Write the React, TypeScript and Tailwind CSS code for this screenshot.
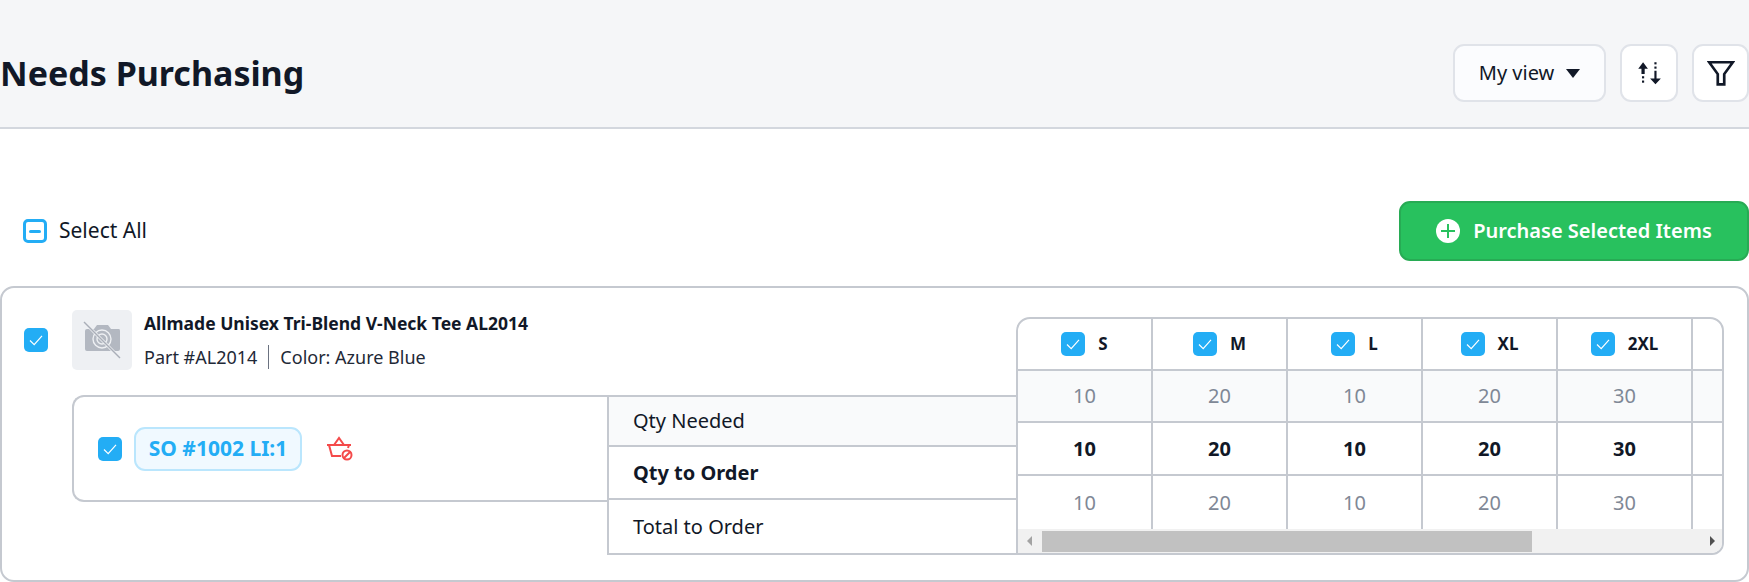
import { useState } from "react";

const SIZES = [
  { label: "S", qty: 10 },
  { label: "M", qty: 20 },
  { label: "L", qty: 10 },
  { label: "XL", qty: 20 },
  { label: "2XL", qty: 30 },
];

function CheckBox() {
  return (
    <span className="flex h-6 w-6 shrink-0 items-center justify-center rounded-[5px] bg-[#23adf5]">
      <svg width="16" height="16" viewBox="0 0 16 16" fill="none" stroke="#ffffff" strokeWidth="1.2">
        <path d="M2 8.5 L6.2 12.6 L14 3.8" />
      </svg>
    </span>
  );
}

function SortIcon() {
  return (
    <svg width="28" height="28" viewBox="0 0 26 26" fill="#111827">
      <path d="M7.5 3 L12 9 L9 9 L9 14 L6 14 L6 9 L3 9 Z" />
      <rect x="6.5" y="16" width="2" height="2" />
      <rect x="6.5" y="20" width="2" height="2" />
      <rect x="18" y="3" width="2" height="2" />
      <rect x="18" y="7" width="2" height="2" />
      <path d="M18 11 H20 V18 H24 L19 23.5 L14 18 H18 Z" />
    </svg>
  );
}

function FilterIcon() {
  return (
    <svg width="28" height="28" viewBox="0 0 26 26" fill="none" stroke="#111827" strokeWidth="2.5">
      <path d="M2 3 H24 L16 14 V23.5 H10 V14 Z" />
    </svg>
  );
}

function NoPhotoIcon() {
  return (
    <svg width="38" height="38" viewBox="0 0 38 38" fill="none">
      <path
        d="M4 8 H11 L14 4 H25 L28 8 H36 Q37 8 37 10 V28 Q37 30 35 30 H4 Q2 30 2 28 V10 Q2 8 4 8 Z"
        fill="#b3b8c1"
      />
      <circle cx="19" cy="18" r="9" stroke="#eef0f3" strokeWidth="1.4" />
      <circle cx="19" cy="18" r="5" stroke="#eef0f3" strokeWidth="1.4" />
      <path d="M1 1 L37 37" stroke="#eef0f3" strokeWidth="3" />
      <path d="M1 1 L37 37" stroke="#a9aeb8" strokeWidth="1.4" />
    </svg>
  );
}

function BasketOffIcon() {
  return (
    <svg width="28" height="26" viewBox="0 0 28 26" fill="none" stroke="#f44a4a" strokeWidth="2">
      <path d="M1 9 H25" />
      <path d="M8 9 L13 2 L18 9" />
      <path d="M3 9 L6 20 H15" />
      <path d="M23 9 L22 12" />
      <circle cx="21" cy="19" r="4.5" />
      <path d="M18 22 L24 16" />
    </svg>
  );
}

export default function App() {
  const [view] = useState("My view");

  return (
    <div className="h-[582px] w-full overflow-hidden bg-white text-[#111827] [font-family:'Noto_Sans',sans-serif]">
      {/* Page header */}
      <div className="flex h-[129px] items-center justify-between border-b-2 border-[#d3d7de] bg-[#f5f6f8] pt-[19px]">
        <h1 className="text-[34px] leading-none font-bold">Needs Purchasing</h1>
        <div className="flex items-center gap-[14px]">
          <button className="flex h-[58px] w-[153px] items-center justify-center gap-[12px] rounded-[11px] border-2 border-[#e0e3e9] bg-[#fbfcfe] text-[20px]">
            {view}
            <span className="h-0 w-0 border-x-[7px] border-t-[9px] border-x-transparent border-t-[#111827]" />
          </button>
          <button className="flex h-[58px] w-[58px] items-center justify-center rounded-[11px] border-2 border-[#e0e3e9] bg-white">
            <SortIcon />
          </button>
          <button className="flex h-[58px] w-[57px] items-center justify-center rounded-[11px] border-2 border-[#e0e3e9] bg-white">
            <FilterIcon />
          </button>
        </div>
      </div>

      {/* Select all + purchase */}
      <div className="flex items-center justify-between pt-[72px] pl-[23px]">
        <label className="flex items-center gap-[12px] text-[21px]">
          <span className="flex h-6 w-6 items-center justify-center rounded-[5px] border-[3px] border-[#23adf5]">
            <span className="h-[3px] w-3 rounded-full bg-[#23adf5]" />
          </span>
          Select All
        </label>
        <button className="flex h-[60px] w-[350px] items-center justify-center gap-[13px] rounded-[11px] border-2 border-[#27ab54] bg-[#28c15e] text-[20px] font-semibold text-white">
          <span className="flex h-6 w-6 items-center justify-center rounded-full bg-white text-[#28c15e]">
            <svg width="14" height="14" viewBox="0 0 14 14" stroke="currentColor" strokeWidth="2">
              <path d="M7 0 V14 M0 7 H14" />
            </svg>
          </span>
          Purchase Selected Items
        </button>
      </div>

      {/* Item card */}
      <div className="mt-[25px] flex h-[296px] items-end rounded-[14px] border-2 border-[#c5c9d0] pr-[23px] pb-[25px]">
        <div className="flex flex-1 flex-col pl-[22px]">
          <div className="flex h-[60px] items-center">
            <CheckBox />
            <div className="ml-[24px] flex h-[60px] w-[60px] items-center justify-center rounded-[5px] bg-[#eef0f3]">
              <NoPhotoIcon />
            </div>
            <div className="ml-[12px] flex flex-col">
              <div className="text-[17.5px] leading-[24px] font-bold">Allmade Unisex Tri-Blend V-Neck Tee AL2014</div>
              <div className="mt-[10px] flex items-center text-[18px] leading-[24px] text-[#1f2937]">
                <span>Part #AL2014</span>
                <span className="mx-[11px] h-6 w-px bg-[#6b7280]" />
                <span>Color: Azure Blue</span>
              </div>
            </div>
          </div>
          <div className="mt-[25px] flex items-start">
            <div className="ml-[48px] flex h-[107px] w-[535px] items-center rounded-l-[12px] border-2 border-r-0 border-[#c5c9d0] pl-[24px]">
              <CheckBox />
              <span className="ml-3 flex h-[44px] w-[168px] items-center justify-center rounded-[11px] border-2 border-[#bae6fd] bg-[#f0f9ff] text-[21px] font-bold whitespace-nowrap text-[#23adf5]">
                SO #1002 LI:1
              </span>
              <span className="ml-[24px]">
                <BasketOffIcon />
              </span>
            </div>
            <div className="flex-1 border-y-2 border-l-2 border-[#c5c9d0] text-[20px]">
              <div className="flex h-[50px] items-center border-b-2 border-[#c5c9d0] bg-[#f9fafb] pl-6">Qty Needed</div>
              <div className="flex h-[53px] items-center border-b-2 border-[#c5c9d0] pl-6 font-bold">Qty to Order</div>
              <div className="flex h-[53px] items-center pl-6">Total to Order</div>
            </div>
          </div>
        </div>

        {/* Size matrix */}
        <div className="w-[708px] shrink-0 overflow-hidden rounded-t-[14px] rounded-br-[12px] border-2 border-[#c5c9d0]">
          <div className="grid grid-cols-[135px_135px_135px_135px_135px_1fr]">
            {SIZES.map((s) => (
              <div key={s.label} className="flex h-[52px] items-center justify-center gap-[13px] border-r-2 border-b-2 border-[#c5c9d0] text-[17px] font-bold">
                <CheckBox />
                {s.label}
              </div>
            ))}
            <div className="h-[52px] border-b-2 border-[#c5c9d0]" />
            {SIZES.map((s) => (
              <div key={s.label} className="flex h-[52px] items-center justify-center border-r-2 border-b-2 border-[#c5c9d0] bg-[#f9fafb] text-[20px] text-[#7f8896]">
                {s.qty}
              </div>
            ))}
            <div className="h-[52px] border-b-2 border-[#c5c9d0] bg-[#f9fafb]" />
            {SIZES.map((s) => (
              <div key={s.label} className="flex h-[53px] items-center justify-center border-r-2 border-b-2 border-[#c5c9d0] text-[20px] font-bold">
                {s.qty}
              </div>
            ))}
            <div className="h-[53px] border-b-2 border-[#c5c9d0]" />
            {SIZES.map((s) => (
              <div key={s.label} className="flex h-[53px] items-center justify-center border-r-2 border-[#c5c9d0] text-[20px] text-[#7f8896]">
                {s.qty}
              </div>
            ))}
            <div className="h-[53px]" />
          </div>
          {/* Scrollbar */}
          <div className="flex h-[24px] items-center bg-[#f1f1f1]">
            <span className="ml-[9px] h-0 w-0 border-y-[5px] border-r-[5px] border-y-transparent border-r-[#a3a3a3]" />
            <div className="ml-[10px] h-[21px] w-[490px] bg-[#c1c1c1]" />
            <span className="ml-[178px] h-0 w-0 border-y-[5px] border-l-[5px] border-y-transparent border-l-[#505050]" />
          </div>
        </div>
      </div>
    </div>
  );
}
